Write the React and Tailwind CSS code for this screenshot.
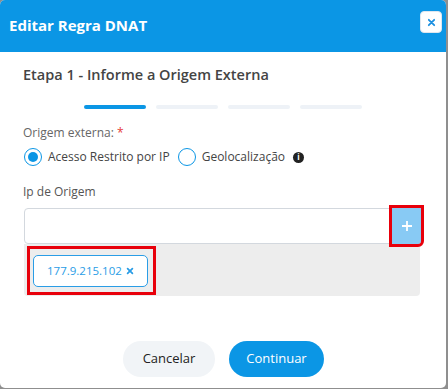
import React from 'react';

const font = { fontFamily: '"Open Sans", "Noto Sans", sans-serif' };

function Radio({ checked, label }) {
  return (
    <label className="flex items-center gap-[6px] cursor-pointer">
      <span className="w-[18px] h-[18px] rounded-full border-[1.5px] border-[#0b96e5] bg-white flex items-center justify-center">
        {checked && <span className="w-[10px] h-[10px] rounded-full bg-[#0b96e5]" />}
      </span>
      <span className="text-[12px] text-[#444]">{label}</span>
    </label>
  );
}

export default function App() {
  const steps = [true, false, false, false];

  return (
    <div className="w-[448px] h-[389px] bg-[#8f8f8f]" style={font}>
      <div className="w-[446px] h-[388px] bg-white rounded-[5px] overflow-hidden flex flex-col">
        {/* header */}
        <div className="h-[52px] bg-[#0b96e5] flex items-center justify-between pl-[9px] pr-[4px]">
          <h2 className="text-white text-[15px] font-bold pb-[2px]">Editar Regra DNAT</h2>
          <button className="w-[22px] h-[22px] mb-[8px] rounded-[4px] bg-white flex items-center justify-center border border-[#dfe6ee]">
            <svg width="9" height="9" viewBox="0 0 10 10" stroke="#1b8fe0" strokeWidth="2" strokeLinecap="round">
              <path d="M2 2 L8 8 M8 2 L2 8" />
            </svg>
          </button>
        </div>

        {/* body */}
        <div className="flex-1 px-[23px] pt-[12px]">
          <h3 className="text-[14.5px] leading-[22px] font-semibold text-[#444]">Etapa 1 - Informe a Origem Externa</h3>

          <div className="flex justify-center gap-[10px] mt-[19px]">
            {steps.map((on, i) => (
              <div key={i} className={on ? 'w-[62px] h-[4px] rounded-full bg-[#0b96e5]' : 'w-[62px] h-[4px] rounded-full bg-[#eef2f7]'} />
            ))}
          </div>

          <div className="mt-[15px] text-[12px] leading-[18px] text-[#666]">
            Origem externa: <span className="text-[#e53935]">*</span>
          </div>

          <div className="flex items-center mt-[6px] pl-[1px]">
            <Radio checked label="Acesso Restrito por IP" />
            <div className="ml-[8px]">
              <Radio label="Geolocalização" />
            </div>
            <span className="ml-[8px] w-[11px] h-[11px] rounded-full bg-[#222] flex items-center justify-center text-white text-[8px] font-bold leading-none">i</span>
          </div>

          <div className="mt-[17px] text-[12px] leading-[18px] text-[#555]">Ip de Origem</div>

          <div className="mt-[7px] w-[398px] pl-[1px]">
            <div className="flex h-[36px]">
              <input className="flex-1 h-full border border-[#d3d8de] rounded-l-[4px] outline-none px-2 text-[13px]" />
              <button className="w-[29px] h-full bg-[#88caf4] rounded-br-[3px] flex items-center justify-center outline-[3px] outline-[#e8000b]">
                <svg width="12" height="12" viewBox="0 0 12 12" stroke="white" strokeWidth="1.8">
                  <path d="M6 1 V11 M1 6 H11" />
                </svg>
              </button>
            </div>
            <div className="h-[52px] bg-[#ededed] rounded-b-[4px] pl-[3px] pt-[2px] mr-[1px]">
              <div className="inline-flex border-[3px] border-[#e8000b] pl-[3px] pr-[5px] pt-[6px] pb-[5px]">
                <span className="h-[32px] px-[13px] flex items-center gap-[4px] bg-white border border-[#2a9de6] rounded-[5px] text-[11.5px] text-[#2a9de6]">
                  177.9.215.102
                  <svg width="8" height="8" viewBox="0 0 10 10" stroke="#2a9de6" strokeWidth="2.2" strokeLinecap="round">
                    <path d="M2 2 L8 8 M8 2 L2 8" />
                  </svg>
                </span>
              </div>
            </div>
          </div>
        </div>

        {/* footer */}
        <div className="flex justify-center gap-[14px] pb-[11px] pl-[1px]">
          <button className="w-[92px] h-[36px] rounded-full bg-[#f1f4f7] text-[13px] font-medium text-[#222]">Cancelar</button>
          <button className="w-[95px] h-[36px] rounded-full bg-[#0b96e5] text-[13px] font-medium text-white">Continuar</button>
        </div>
      </div>
    </div>
  );
}
